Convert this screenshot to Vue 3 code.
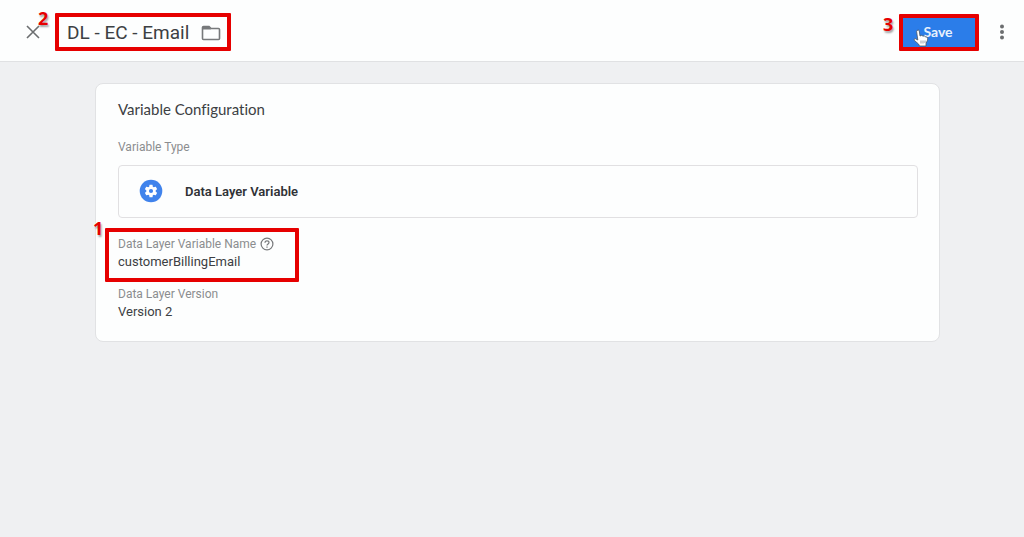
<script setup>
const variable = {
  name: 'DL - EC - Email',
  type: 'Data Layer Variable',
  key: 'customerBillingEmail',
  version: 'Version 2',
}
</script>

<template>
  <div class="page">
    <header class="bar">
      <button class="icon-button close" type="button" aria-label="Close">
        <svg width="14" height="14" viewBox="0 0 14 14" fill="none" stroke="#6c6e70" stroke-width="1.6">
          <path d="M1 1 13 13M13 1 1 13" />
        </svg>
        <span class="step step-name">2</span>
      </button>
      <div class="name marked">
        <h1>{{ variable.name }}</h1>
        <button class="icon-button" type="button" aria-label="Move to folder">
          <svg width="20" height="16" viewBox="0 0 20 16">
            <path d="M2.5 1.5H8L10 3.5H17.5Q18.5 3.5 18.5 4.5V13.5Q18.5 14.5 17.5 14.5H2.5Q1.5 14.5 1.5 13.5V2.5Q1.5 1.5 2.5 1.5Z" fill="none" stroke="#77797b" stroke-width="1.6" />
            <path d="M2 1.5H8L10 4.5H2Z" fill="#77797b" />
          </svg>
        </button>
      </div>
      <div class="save-area marked">
        <button class="save" type="button">Save</button>
        <span class="step step-save">3</span>
        <svg class="pointer" width="16" height="18" viewBox="0 0 16 18">
          <path d="M4 1.5Q5.2.5 6.2 1.6L7 7 8.8 6.3 10 7.2 11.5 6.8 12.5 8 14 8Q15 9 14.6 11L13 14.5V17H6.5L5.5 15 1.5 11.5Q.5 10 2 9.5L4.8 11 3.6 2.5Z" fill="#fff" stroke="#4b5563" stroke-width=".8" stroke-linejoin="round" />
          <path d="M8 11.5V14.5M10 11.5V14.5M12 11.5V14" fill="none" stroke="#6b7280" stroke-width=".7" />
        </svg>
      </div>
      <button class="icon-button more" type="button" aria-label="More actions">
        <svg width="6" height="18" viewBox="0 0 6 18" fill="#6c6e70">
          <circle cx="3" cy="3.5" r="2" />
          <circle cx="3" cy="9" r="2" />
          <circle cx="3" cy="14.5" r="2" />
        </svg>
      </button>
    </header>

    <main class="card">
      <h2>Variable Configuration</h2>
      <p class="label">Variable Type</p>
      <button class="type" type="button">
        <svg width="24" height="24" viewBox="0 0 24 24">
          <circle cx="12" cy="12" r="11.3" fill="#4083ec" />
          <g transform="translate(4.2 4.2) scale(.65)">
            <path fill="#fff" d="M19.140 12.940c.040-.300.060-.610.060-.940s-.020-.640-.070-.940l2.030-1.580a.490.490 0 0 0 .120-.610l-1.920-3.320a.490.490 0 0 0-.590-.220l-2.390.960a7 7 0 0 0-1.620-.940l-.360-2.540a.480.480 0 0 0-.480-.410h-3.840a.470.470 0 0 0-.470.410l-.360 2.540a7.300 7.300 0 0 0-1.620.940l-2.390-.960a.480.480 0 0 0-.590.220L2.740 8.870a.470.470 0 0 0 .120.610l2.030 1.580a6 6 0 0 0 0 1.880l-2.030 1.580a.490.490 0 0 0-.120.610l1.920 3.320c.120.220.370.290.590.220l2.390-.960c.500.380 1.030.700 1.620.940l.360 2.540c.050.240.240.410.480.410h3.840c.240 0 .440-.170.470-.410l.360-2.540a7 7 0 0 0 1.620-.940l2.390.960c.220.080.470 0 .590-.220l1.920-3.320a.470.470 0 0 0-.120-.610zM12 15.200a3.200 3.200 0 1 1 0-6.400 3.200 3.200 0 0 1 0 6.400z" />
          </g>
        </svg>
        <span>{{ variable.type }}</span>
      </button>
      <div class="field marked key">
        <div class="label-row">
          <p class="label">Data Layer Variable Name</p>
          <button class="icon-button" type="button" aria-label="Help">
            <svg width="14" height="14" viewBox="0 0 14 14" fill="none" stroke="#77797b" stroke-width="1.2">
              <circle cx="7" cy="7" r="5.9" />
              <path d="M5 5.7Q5 3.800 7 3.800T9 5.600C9 6.900 7 7 7 8.500M7 9.500V10.700" />
            </svg>
          </button>
        </div>
        <p class="value">{{ variable.key }}</p>
        <span class="step step-key">1</span>
      </div>
      <div class="field">
        <p class="label">Data Layer Version</p>
        <p class="value">{{ variable.version }}</p>
      </div>
    </main>
  </div>
</template>

<style>
body {
  margin: 0;
  background: #eff0f2;
}
</style>

<style scoped>
.page {
  min-height: 100vh;
  background: #eff0f2;
  color: #3c4043;
  font-family: Roboto, "Liberation Sans", sans-serif;
}

h1,
h2,
p {
  margin: 0;
}

button {
  font: inherit;
  cursor: pointer;
}

.bar {
  display: flex;
  align-items: center;
  box-sizing: border-box;
  height: 62px;
  padding: 3px 19px 0 26px;
  border-bottom: 1px solid #e0e1e3;
  background: #fdfefe;
}

.icon-button {
  display: flex;
  padding: 0;
  border: 0;
  background: none;
}

.close {
  position: relative;
}

.marked {
  position: relative;
  box-sizing: border-box;
  border: 4px solid #e60000;
  border-radius: 1px;
}

.name {
  display: flex;
  align-items: center;
  gap: 12px;
  height: 38px;
  margin-left: 15px;
  padding: 2px 6px 0 8px;
}

h1 {
  font-size: 19px;
  font-weight: 400;
  line-height: 24px;
}

.save-area {
  width: 80px;
  height: 37px;
  margin-left: auto;
}

.save {
  display: block;
  width: 100%;
  height: 100%;
  padding: 0 2px 2px 0;
  border: 0;
  background: #2b7de9;
  color: #e8f1fd;
  font-family: Lato, sans-serif;
  font-size: 14px;
  font-weight: 700;
}

.pointer {
  position: absolute;
  top: 11px;
  left: 10px;
}

.more {
  margin-left: 20px;
}

.step {
  position: absolute;
  color: #e60000;
  font-family: "Open Sans", sans-serif;
  font-size: 18px;
  font-weight: 700;
  line-height: 20px;
  text-shadow: 1px 2px 2px #a0a0a0, -1px 0 1px #fff;
}

.step-name {
  top: -17px;
  left: 12px;
}

.step-save {
  top: -4px;
  left: -20px;
}

.step-key {
  top: -14px;
  left: -16px;
}

.card {
  margin: 21px 84px 0 95px;
  padding: 15px 21px 19px 22px;
  border: 1px solid #e1e2e4;
  border-radius: 8px;
  background: #fdfefe;
}

h2 {
  font-family: Lato, sans-serif;
  font-size: 15px;
  font-weight: 400;
  font-variant-ligatures: none;
  line-height: 20px;
}

.label {
  color: #8b8d8f;
  font-size: 12px;
  line-height: 16px;
}

h2 + .label {
  margin-top: 20px;
}

.type {
  display: flex;
  align-items: center;
  gap: 22px;
  width: 100%;
  height: 53px;
  margin-top: 10px;
  padding: 0 20px 1px;
  border: 1px solid #e1e0e2;
  border-radius: 4px;
  background: transparent;
  color: #303236;
  font-size: 13px;
  font-weight: 600;
}

.key {
  width: 194px;
  height: 54px;
  margin: 10px 0 4px -13px;
  padding: 4px 9px 0;
}

.label-row {
  display: flex;
  align-items: center;
  gap: 4px;
}

.value {
  font-size: 13px;
  line-height: 20px;
}
</style>
